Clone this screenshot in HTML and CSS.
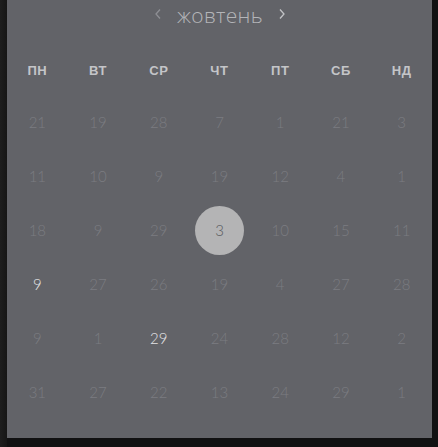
FILE: index.html
```html
<!DOCTYPE html>
<html lang="uk">
<head>
<meta charset="utf-8">
<link rel="stylesheet" href="styles.css">
</head>
<body>
<div class="frame">
  <div class="panel">
    <div class="month">
      <svg class="chev" width="8" height="12" viewBox="0 0 8 12"><path d="M6 1.5 L2 6 L6 10.5" fill="none" stroke="#8e8f94" stroke-width="1.3"/></svg>
      <span class="title">жовтень</span>
      <svg class="chev" width="8" height="12" viewBox="0 0 8 12"><path d="M2 1.5 L6 6 L2 10.5" fill="none" stroke="#c2c3c6" stroke-width="1.3"/></svg>
    </div>
    <div class="grid">
      <div class="dow">ПН</div><div class="dow">ВТ</div><div class="dow">СР</div><div class="dow">ЧТ</div><div class="dow">ПТ</div><div class="dow">СБ</div><div class="dow">НД</div>
      <div class="d">21</div><div class="d">19</div><div class="d">28</div><div class="d">7</div><div class="d">1</div><div class="d">21</div><div class="d">3</div>
      <div class="d">11</div><div class="d">10</div><div class="d">9</div><div class="d">19</div><div class="d">12</div><div class="d">4</div><div class="d">1</div>
      <div class="d">18</div><div class="d">9</div><div class="d">29</div><div class="d"><span class="sel">3</span></div><div class="d">10</div><div class="d">15</div><div class="d">11</div>
      <div class="d hi">9</div><div class="d">27</div><div class="d">26</div><div class="d">19</div><div class="d">4</div><div class="d">27</div><div class="d">28</div>
      <div class="d">9</div><div class="d">1</div><div class="d hi">29</div><div class="d">24</div><div class="d">28</div><div class="d">12</div><div class="d">2</div>
      <div class="d">31</div><div class="d">27</div><div class="d">22</div><div class="d">13</div><div class="d">24</div><div class="d">29</div><div class="d">1</div>
    </div>
  </div>
</div>
</body>
</html>
```
FILE: styles.css
```css
html, body {
  margin: 0;
  padding: 0;
  background: #111112;
  height: 100%;
  overflow: hidden;
}
.frame {
  display: flex;
  padding-left: 7px;
  background: linear-gradient(90deg, #1e1e1e 0, #161616 7px, #111112 7px);
  height: 447px;
  box-sizing: border-box;
}
.panel {
  width: 425px;
  height: 438px;
  background: #626368;
  font-family: "Lato", "Open Sans", sans-serif;
}
.month {
  height: 30px;
  display: flex;
  align-items: center;
  justify-content: center;
  gap: 15px;
  padding-left: 1px;
}
.title {
  font-family: "Open Sans", sans-serif;
  font-weight: 300;
  font-size: 21px;
  letter-spacing: 0.3px;
  color: #b4b5b8;
  line-height: 30px;
}
.chev {
  display: block;
  margin-top: -3px;
}
.grid {
  margin-top: 15px;
  display: grid;
  grid-template-columns: repeat(7, 1fr);
  grid-template-rows: 50px repeat(6, 54px);
}
.dow {
  display: flex;
  align-items: center;
  justify-content: center;
  font-family: "Liberation Sans", Arial, sans-serif;
  font-weight: bold;
  font-size: 13px;
  letter-spacing: 0.6px;
  color: #c4c5c8;
}
.d {
  display: flex;
  align-items: center;
  justify-content: center;
  font-family: "Lato", sans-serif;
  font-weight: 300;
  font-size: 15px;
  color: #7b7c81;
}
.d.hi {
  color: #e4e4e6;
}
.sel {
  width: 49px;
  height: 49px;
  border-radius: 50%;
  background: #b4b4b5;
  color: #5a5b60;
  display: flex;
  align-items: center;
  justify-content: center;
}
```
